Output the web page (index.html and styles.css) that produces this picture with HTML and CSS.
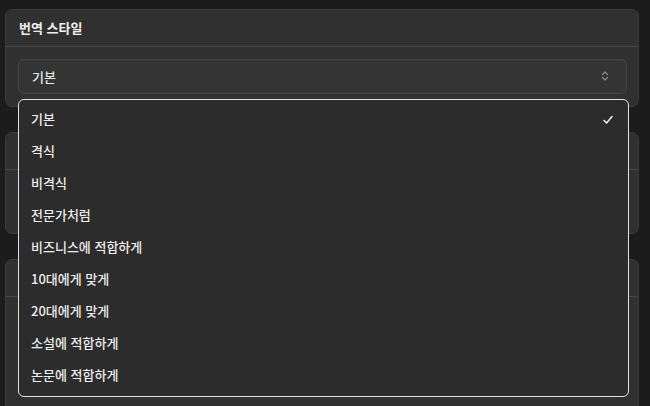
FILE: index.html
```html
<!DOCTYPE html>
<html lang="ko">
<head>
<meta charset="utf-8">
<link rel="stylesheet" href="styles.css">
</head>
<body>
<div class="page">
  <section class="card card-1">
    <div class="card-head">번역 스타일</div>
    <div class="card-body">
      <div class="select">
        <span>기본</span>
        <svg class="chev" width="8" height="12" viewBox="0 0 8 12"><path d="M1.5 4.5 L4 2 L6.5 4.5 M1.5 7.5 L4 10 L6.5 7.5" fill="none" stroke="#8a8a8a" stroke-width="1.2" stroke-linecap="round" stroke-linejoin="round"/></svg>
      </div>
    </div>
  </section>
  <section class="card card-2">
    <div class="card-head">&nbsp;</div>
    <div class="card-body"></div>
  </section>
  <section class="card card-3">
    <div class="card-head">&nbsp;</div>
  </section>
  <ul class="menu">
    <li class="item selected"><span>기본</span>
      <svg class="check" width="12" height="12" viewBox="0 0 12 12"><path d="M2 6.5 L4.6 9 L10 2.5" fill="none" stroke="#f0f0f0" stroke-width="1.5" stroke-linecap="round" stroke-linejoin="round"/></svg>
    </li>
    <li class="item">격식</li>
    <li class="item">비격식</li>
    <li class="item">전문가처럼</li>
    <li class="item">비즈니스에 적합하게</li>
    <li class="item">10대에게 맞게</li>
    <li class="item">20대에게 맞게</li>
    <li class="item">소설에 적합하게</li>
    <li class="item">논문에 적합하게</li>
  </ul>
</div>
</body>
</html>
```
FILE: styles.css
```css
html, body {
  margin: 0;
  padding: 0;
  background: #1c1c1c;
  width: 650px;
  height: 406px;
  overflow: hidden;
  font-family: "Noto Sans CJK KR", "Noto Sans", sans-serif;
  color: #ececec;
}
.page {
  position: relative;
  height: 406px;
  box-sizing: border-box;
  overflow: hidden;
  padding: 9px 11px 0 5px;
  display: flex;
  flex-direction: column;
  gap: 25px;
}
.card {
  background: #303030;
  border: 1px solid #3a3a3a;
  border-radius: 7px;
  box-sizing: border-box;
  flex-shrink: 0;
}
.card-head {
  height: 37px;
  border-bottom: 1px solid #474747;
  display: flex;
  align-items: center;
  padding: 0 0 2px 13px;
  box-sizing: border-box;
  font-size: 13px;
  font-weight: 700;
  color: #f0f0f0;
}
.card-1 { height: 98px; }
.card-2 { height: 102px; }
.card-3 { height: 160px; }
.card-body {
  padding: 12px 11px 0 12px;
}
.select {
  height: 35px;
  box-sizing: border-box;
  border: 1px solid #464646;
  border-radius: 6px;
  background: #343434;
  display: flex;
  align-items: center;
  justify-content: space-between;
  padding: 0 17px 1px 13px;
  font-size: 13px;
  font-weight: 500;
  color: #e6e6e6;
}
.chev { display: block; }
.menu {
  position: absolute;
  left: 18px;
  top: 99px;
  width: 611px;
  box-sizing: border-box;
  margin: 0;
  padding: 4px 0;
  list-style: none;
  background: #2c2c2c;
  border: 1px solid #e2e2e2;
  border-radius: 6px;
}
.item {
  height: 32px;
  box-sizing: border-box;
  display: flex;
  align-items: center;
  justify-content: space-between;
  padding: 0 14px 3px 12px;
  font-size: 13px;
  font-weight: 500;
  color: #ececec;
}
.check { display: block; margin-top: 3px; }
```
